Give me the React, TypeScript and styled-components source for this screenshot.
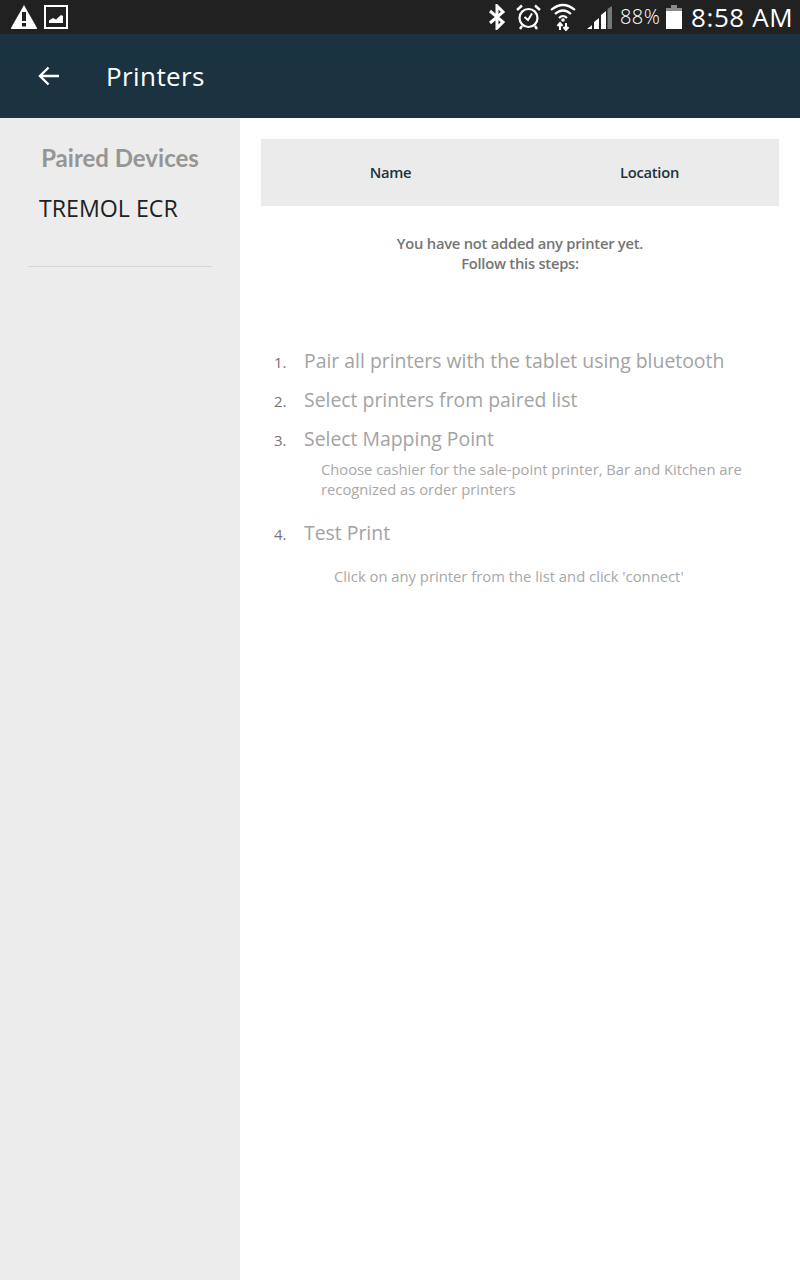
import React from "react";
import styled, { createGlobalStyle } from "styled-components";

const GlobalStyle = createGlobalStyle`
  html, body {
    margin: 0;
    padding: 0;
    background: #fff;
  }
  body {
    font-family: "Open Sans", "Noto Sans", sans-serif;
  }
`;

const Page = styled.div`
  width: 800px;
  height: 1280px;
  display: flex;
  flex-direction: column;
  overflow: hidden;
`;

const StatusBar = styled.div`
  height: 34px;
  flex: none;
  background: #212121;
  display: flex;
  align-items: center;
  justify-content: space-between;
  padding: 0 8px 0 10px;
`;

const StatusGroup = styled.div`
  display: flex;
  align-items: center;
`;

const BatteryText = styled.span`
  width: 42px;
  margin: 0 4px 0 8px;
  font-family: "Open Sans", sans-serif;
  font-size: 20px;
  line-height: 34px;
  font-weight: 300;
  color: #fff;
  letter-spacing: 0.4px;
  white-space: nowrap;
`;

const ClockText = styled.span`
  width: 101px;
  margin-left: 9px;
  font-family: "Open Sans", sans-serif;
  font-size: 26px;
  line-height: 34px;
  font-weight: 400;
  color: #fff;
  letter-spacing: 0.6px;
  white-space: nowrap;
`;

const AppBar = styled.header`
  height: 84px;
  flex: none;
  background: #1b3341;
  display: flex;
  align-items: center;
  padding-left: 38px;
  color: #fff;
`;

const Title = styled.h1`
  margin: 0 0 0 46px;
  font-size: 26px;
  font-weight: 400;
  letter-spacing: 0.4px;
`;

const Body = styled.div`
  flex: 1;
  display: flex;
`;

const Sidebar = styled.aside`
  width: 240px;
  flex: none;
  background: #ececec;
  display: flex;
  flex-direction: column;
`;

const SidebarTitle = styled.h2`
  margin: 24px 0 0;
  text-align: center;
  font-family: "Lato", sans-serif;
  font-size: 24px;
  line-height: 32px;
  font-weight: 700;
  color: #959595;
`;

const DeviceRow = styled.div`
  margin: 18px 0 0 39px;
  font-size: 23.2px;
  line-height: 33px;
  color: #212121;
`;

const SidebarRule = styled.hr`
  margin: 41px 28px 0;
  border: 0;
  border-top: 1px solid #d6d6d6;
`;

const Content = styled.main`
  flex: 1;
  padding: 21px;
`;

const TableHead = styled.div`
  height: 67px;
  padding-bottom: 2px;
  box-sizing: border-box;
  background: #ebebeb;
  display: grid;
  grid-template-columns: 259px 259px;
  align-items: center;
  justify-items: center;
  font-size: 14.75px;
  font-weight: 600;
  letter-spacing: -0.25px;
  color: #1b3341;
`;

const Notice = styled.p`
  margin: 27px 0 0;
  text-align: center;
  font-size: 14.75px;
  line-height: 20px;
  font-weight: 600;
  letter-spacing: -0.25px;
  color: #757575;
`;

const Steps = styled.ol`
  list-style: none;
  margin: 75px 0 0;
  padding: 0;
`;

const Step = styled.li<{ $gap: number }>`
  margin-top: ${(p) => p.$gap}px;
`;

const StepRow = styled.div`
  display: flex;
  align-items: baseline;
`;

const StepNumber = styled.span`
  width: 43px;
  flex: none;
  padding-left: 13px;
  box-sizing: border-box;
  font-size: 15px;
  color: #757575;
`;

const StepLabel = styled.span`
  font-size: 19.4px;
  line-height: 26px;
  color: #a3a3a3;
`;

const StepDetail = styled.p`
  margin: 7px 0 0 60px;
  width: 440px;
  font-size: 14.75px;
  line-height: 20px;
  color: #a8a8a8;
`;

const Hint = styled.p`
  margin: 20px 0 0 73px;
  font-size: 14.8px;
  line-height: 20px;
  color: #a8a8a8;
`;

const steps = [
  { label: "Pair all printers with the tablet using bluetooth", gap: 0 },
  { label: "Select printers from paired list", gap: 13 },
  { label: "Select Mapping Point", gap: 13 },
  { label: "Test Print", gap: 21 },
];

function WarningIcon() {
  return (
    <svg width="28" height="26" viewBox="0 0 28 26">
      <path d="M14 1 L27 24 Q27.5 25 26 25 H2 Q.5 25 1 24 Z" fill="#fff" />
      <rect x="12" y="8" width="4" height="9" fill="#212121" />
      <rect x="12" y="19" width="4" height="3.5" fill="#212121" />
    </svg>
  );
}

function PictureIcon() {
  return (
    <svg width="24" height="24" viewBox="0 0 24 24" style={{ marginLeft: 6 }}>
      <rect x="1" y="1" width="22" height="22" fill="none" stroke="#fff" strokeWidth="2" />
      <path d="M5 18 V15.5 L9 13 L12 14.5 L17 10 L19 11 V18 Z" fill="#fff" />
    </svg>
  );
}

function BluetoothIcon() {
  return (
    <svg width="18" height="26" viewBox="0 0 18 26">
      <path d="M2 7 L15 18 L9 24 V2 L15 8 L2 19" fill="none" stroke="#fff" strokeWidth="3" />
    </svg>
  );
}

function AlarmIcon() {
  return (
    <svg width="25" height="26" viewBox="0 0 25 26" style={{ marginLeft: 10 }}>
      <circle cx="12.5" cy="14" r="9" fill="none" stroke="#fff" strokeWidth="2.2" />
      <path d="M8.5 13 L12 16 L16 9.5" fill="none" stroke="#fff" strokeWidth="2" />
      <path d="M1 6 L6 1.5 M24 6 L19 1.5 M6 22 L4 25 M19 22 L21 25" stroke="#fff" strokeWidth="2.4" />
    </svg>
  );
}

function WifiIcon() {
  return (
    <svg width="26" height="28" viewBox="0 0 26 28" style={{ marginLeft: 9 }}>
      <path d="M1 7 Q13 -3 25 7" fill="none" stroke="#fff" strokeWidth="2.2" />
      <path d="M5 11 Q13 4 21 11" fill="none" stroke="#fff" strokeWidth="2.2" />
      <path d="M9 15 Q13 11 17 15" fill="none" stroke="#fff" strokeWidth="2.2" />
      <circle cx="13" cy="17" r="1.8" fill="#fff" />
      <path d="M10 27 V21 M7.5 23 L10 20 L12.5 23 M16 20 V26 M13.5 24 L16 27 L18.5 24" fill="none" stroke="#fff" strokeWidth="2" />
    </svg>
  );
}

function SignalIcon() {
  return (
    <svg width="25" height="24" viewBox="0 0 25 24" style={{ marginLeft: 11, marginTop: 2 }}>
      <path d="M0 23 L5 19 V23 Z M7 23 V16 L12 12 V23 Z M14 23 V9 L19 5 V23 Z" fill="#fff" />
      <path d="M20.5 23 V3 L25 0 V23 Z" fill="#777" />
    </svg>
  );
}

function BatteryIcon() {
  return (
    <svg width="16" height="24" viewBox="0 0 16 24">
      <rect x="5" y="0" width="6" height="3" fill="#8a8a8a" />
      <rect x="0" y="3" width="16" height="3" fill="#8a8a8a" />
      <rect x="0" y="6" width="16" height="18" fill="#fff" />
    </svg>
  );
}

function BackArrow() {
  return (
    <svg width="22" height="20" viewBox="0 0 22 20">
      <path d="M21 10 H2.5 M10.5 1.5 L2 10 L10.5 18.5" fill="none" stroke="#fff" strokeWidth="2.4" />
    </svg>
  );
}

export default function App() {
  return (
    <Page>
      <GlobalStyle />
      <StatusBar>
        <StatusGroup>
          <WarningIcon />
          <PictureIcon />
        </StatusGroup>
        <StatusGroup>
          <BluetoothIcon />
          <AlarmIcon />
          <WifiIcon />
          <SignalIcon />
          <BatteryText>88%</BatteryText>
          <BatteryIcon />
          <ClockText>8:58 AM</ClockText>
        </StatusGroup>
      </StatusBar>
      <AppBar>
        <BackArrow />
        <Title>Printers</Title>
      </AppBar>
      <Body>
        <Sidebar>
          <SidebarTitle>Paired Devices</SidebarTitle>
          <DeviceRow>TREMOL ECR</DeviceRow>
          <SidebarRule />
        </Sidebar>
        <Content>
          <TableHead>
            <span>Name</span>
            <span>Location</span>
          </TableHead>
          <Notice>
            You have not added any printer yet.
            <br />
            Follow this steps:
          </Notice>
          <Steps>
            {steps.map((step, i) => (
              <Step key={step.label} $gap={step.gap}>
                <StepRow>
                  <StepNumber>{i + 1}.</StepNumber>
                  <StepLabel>{step.label}</StepLabel>
                </StepRow>
                {i === 2 && (
                  <StepDetail>
                    Choose cashier for the sale-point printer, Bar and Kitchen are recognized as order printers
                  </StepDetail>
                )}
              </Step>
            ))}
          </Steps>
          <Hint>Click on any printer from the list and click 'connect'</Hint>
        </Content>
      </Body>
    </Page>
  );
}
